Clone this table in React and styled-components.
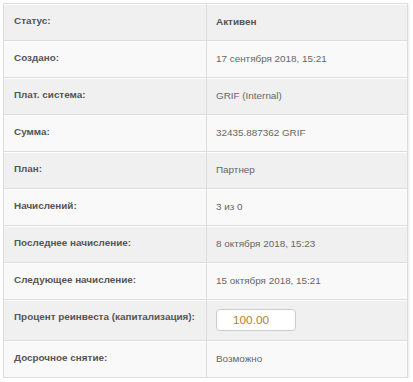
import React from 'react';
import styled, { createGlobalStyle } from 'styled-components';

const GlobalStyle = createGlobalStyle`
  html, body {
    margin: 0;
    padding: 0;
    background: #ffffff;
  }
  body {
    font-family: "Liberation Sans", Arial, sans-serif;
  }
`;

const Page = styled.div`
  padding: 3px 5px 0 3px;
`;

const Table = styled.table`
  width: 405px;
  table-layout: fixed;
  border-collapse: collapse;
  border: 1px solid #d9d9d9;
  box-shadow: 1px 1px 2px rgba(0, 0, 0, 0.08);
`;

const Row = styled.tr`
  background: ${p => (p.$shade ? '#f0f0f0' : '#f9f9f9')};
  height: ${p => (p.$tall ? 41 : 37)}px;
`;

const Label = styled.td`
  box-sizing: border-box;
  width: 203px;
  padding: 10px 0 0 10px;
  vertical-align: top;
  white-space: nowrap;
  border: 1px solid #dddddd;
  box-shadow: inset 0 1px 0 #ffffff;
  font-size: 9.9px;
  line-height: 14px;
  font-weight: bold;
  color: #555555;
`;

const Value = styled.td`
  padding: 0 8px 0 9px;
  vertical-align: middle;
  white-space: nowrap;
  border: 1px solid #dddddd;
  box-shadow: inset 0 1px 0 #ffffff;
  font-size: 9.9px;
  line-height: 14px;
  font-weight: ${p => (p.$strong ? 'bold' : 'normal')};
  color: ${p => (p.$strong ? '#555555' : '#666666')};
`;

const Field = styled.input`
  display: block;
  box-sizing: border-box;
  width: 80px;
  height: 22px;
  padding: 0 0 0 16px;
  border: 1px solid #cccccc;
  border-radius: 4px;
  background: #ffffff;
  font-family: "Liberation Sans", Arial, sans-serif;
  font-size: 11.8px;
  color: #b5822c;
  outline: none;
`;

const rows = [
  { label: 'Статус:', value: 'Активен', strong: true },
  { label: 'Создано:', value: '17 сентября 2018, 15:21' },
  { label: 'Плат. система:', value: 'GRIF (Internal)' },
  { label: 'Сумма:', value: '32435.887362 GRIF' },
  { label: 'План:', value: 'Партнер' },
  { label: 'Начислений:', value: '3 из 0' },
  { label: 'Последнее начисление:', value: '8 октября 2018, 15:23' },
  { label: 'Следующее начисление:', value: '15 октября 2018, 15:21' },
  { label: 'Процент реинвеста (капитализация):', input: '100.00' },
  { label: 'Досрочное снятие:', value: 'Возможно' },
];

export default function App() {
  return (
    <>
      <GlobalStyle />
      <Page>
        <Table>
          <tbody>
            {rows.map((r, i) => (
              <Row key={r.label} $shade={i % 2 === 0} $tall={!!r.input}>
                <Label>{r.label}</Label>
                <Value $strong={r.strong}>
                  {r.input ? <Field defaultValue={r.input} /> : r.value}
                </Value>
              </Row>
            ))}
          </tbody>
        </Table>
      </Page>
    </>
  );
}
